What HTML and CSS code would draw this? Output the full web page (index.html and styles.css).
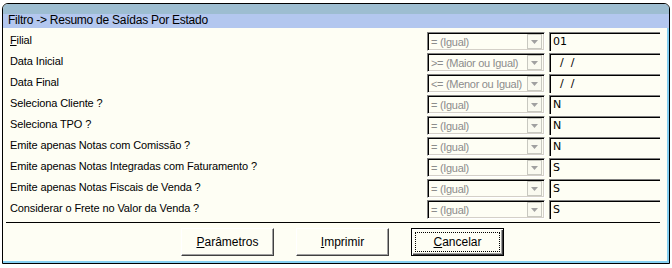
FILE: index.html
```html
<!DOCTYPE html>
<html lang="pt-BR">
<head>
    <meta charset="UTF-8">
    <title>Filtro -> Resumo de Saídas Por Estado</title>
    <link rel="stylesheet" href="styles.css">
</head>
<body>
    <div class="window">
        <div class="titlebar">Filtro -&gt; Resumo de Saídas Por Estado</div>

        <div class="filters">
            <div class="row">
                <label class="label"><u>F</u>ilial</label>
                <div class="combo"><span class="combo-text">= (Igual)</span><span class="combo-btn"><svg width="7" height="4" viewBox="0 0 7 4"><path d="M0 0h7L3.5 4z" fill="#a0a0a0"/></svg></span></div>
                <div class="field">01</div>
            </div>
            <div class="row">
                <label class="label">Data Inicial</label>
                <div class="combo"><span class="combo-text">&gt;= (Maior ou Igual)</span><span class="combo-btn"><svg width="7" height="4" viewBox="0 0 7 4"><path d="M0 0h7L3.5 4z" fill="#a0a0a0"/></svg></span></div>
                <div class="field">  /  /</div>
            </div>
            <div class="row">
                <label class="label">Data Final</label>
                <div class="combo"><span class="combo-text">&lt;= (Menor ou Igual)</span><span class="combo-btn"><svg width="7" height="4" viewBox="0 0 7 4"><path d="M0 0h7L3.5 4z" fill="#a0a0a0"/></svg></span></div>
                <div class="field">  /  /</div>
            </div>
            <div class="row">
                <label class="label">Seleciona Cliente ?</label>
                <div class="combo"><span class="combo-text">= (Igual)</span><span class="combo-btn"><svg width="7" height="4" viewBox="0 0 7 4"><path d="M0 0h7L3.5 4z" fill="#a0a0a0"/></svg></span></div>
                <div class="field">N</div>
            </div>
            <div class="row">
                <label class="label">Seleciona TPO ?</label>
                <div class="combo"><span class="combo-text">= (Igual)</span><span class="combo-btn"><svg width="7" height="4" viewBox="0 0 7 4"><path d="M0 0h7L3.5 4z" fill="#a0a0a0"/></svg></span></div>
                <div class="field">N</div>
            </div>
            <div class="row">
                <label class="label">Emite apenas Notas com Comissão ?</label>
                <div class="combo"><span class="combo-text">= (Igual)</span><span class="combo-btn"><svg width="7" height="4" viewBox="0 0 7 4"><path d="M0 0h7L3.5 4z" fill="#a0a0a0"/></svg></span></div>
                <div class="field">N</div>
            </div>
            <div class="row">
                <label class="label">Emite apenas Notas Integradas com Faturamento ?</label>
                <div class="combo"><span class="combo-text">= (Igual)</span><span class="combo-btn"><svg width="7" height="4" viewBox="0 0 7 4"><path d="M0 0h7L3.5 4z" fill="#a0a0a0"/></svg></span></div>
                <div class="field">S</div>
            </div>
            <div class="row">
                <label class="label">Emite apenas Notas Fiscais de Venda ?</label>
                <div class="combo"><span class="combo-text">= (Igual)</span><span class="combo-btn"><svg width="7" height="4" viewBox="0 0 7 4"><path d="M0 0h7L3.5 4z" fill="#a0a0a0"/></svg></span></div>
                <div class="field">S</div>
            </div>
            <div class="row">
                <label class="label">Considerar o Frete no Valor da Venda ?</label>
                <div class="combo"><span class="combo-text">= (Igual)</span><span class="combo-btn"><svg width="7" height="4" viewBox="0 0 7 4"><path d="M0 0h7L3.5 4z" fill="#a0a0a0"/></svg></span></div>
                <div class="field">S</div>
            </div>
        </div>

        <div class="separator"></div>

        <div class="buttons">
            <button class="btn"><u>P</u>arâmetros</button>
            <button class="btn"><u>I</u>mprimir</button>
            <button class="btn btn-default"><span class="focus"><u>C</u>ancelar</span></button>
        </div>
    </div>
</body>
</html>
```

FILE: styles.css
```css
/* General Reset */
* {
    margin: 0;
    padding: 0;
    box-sizing: border-box;
}

body {
    background: #fff;
    font-family: 'Liberation Sans', Arial, sans-serif;
    font-size: 11px;
    color: #000;
}

.window {
    margin: 3px 0 0 2px;
    width: 668px;
    height: 261px;
    background: #fefef4;
    border: 1px solid #000;
    border-radius: 6px 6px 0 0;
    box-shadow: inset -2px -2px 0 #86d0f2;
    display: flex;
    flex-direction: column;
    overflow: hidden;
}

.titlebar {
    height: 24px;
    padding: 9px 0 0 5px;
    font-size: 12px;
    line-height: 14px;
    letter-spacing: -0.25px;
    background: linear-gradient(#9dbdd1 0, #9dbdd1 10px, #b3c7ef 10px);
}

.filters {
    padding: 4px 9px 0 7px;
    display: flex;
    flex-direction: column;
    gap: 2px;
}

.row {
    display: flex;
    align-items: center;
    height: 19px;
}

.label {
    flex: 1;
    padding-bottom: 4px;
    letter-spacing: -0.12px;
}

.combo {
    width: 118px;
    height: 19px;
    border-top: 1px solid #808080;
    border-left: 1px solid #808080;
    border-bottom: 1px solid #fff;
    border-right: 1px solid #fff;
    box-shadow: inset 1px 1px 0 #000, inset -1px -1px 0 #d4d0c8;
    display: flex;
    align-items: center;
    justify-content: space-between;
    padding: 0 2px 0 3px;
}

.combo-text {
    color: #8c8c8c;
    white-space: nowrap;
    letter-spacing: -0.3px;
}

.combo-btn {
    flex: none;
    width: 15px;
    height: 15px;
    border: 1px solid #c8c8c0;
    background: #fafaf0;
    display: flex;
    align-items: center;
    justify-content: center;
}

.field {
    width: 111px;
    height: 19px;
    margin-left: 4px;
    border-top: 1px solid #808080;
    border-left: 1px solid #808080;
    box-shadow: inset 1px 1px 0 #000;
    padding: 2px 0 0 3px;
    line-height: 14px;
    font-family: Tahoma, 'DejaVu Sans', sans-serif;
    white-space: pre;
}

.separator {
    margin: 3px 9px 0 3px;
    border-top: 1px solid #000;
}

.buttons {
    display: flex;
    gap: 22px;
    padding: 5px 0 0 178px;
}

.btn {
    width: 93px;
    height: 28px;
    font-family: 'Liberation Sans', Arial, sans-serif;
    font-size: 12px;
    background: #fefef4;
    border-top: 1px solid #fff;
    border-left: 1px solid #fff;
    border-right: 1px solid #404040;
    border-bottom: 1px solid #404040;
    box-shadow: inset -1px -1px 0 #a0a0a0;
    color: #000;
}

.btn-default {
    border: 1px solid #000;
    box-shadow: inset 1px 1px 0 #fff, inset -1px -1px 0 #404040, inset -2px -2px 0 #a0a0a0;
    padding: 3px;
}

.focus {
    display: flex;
    align-items: center;
    justify-content: center;
    height: 100%;
    border: 1px dotted #000;
}
```
